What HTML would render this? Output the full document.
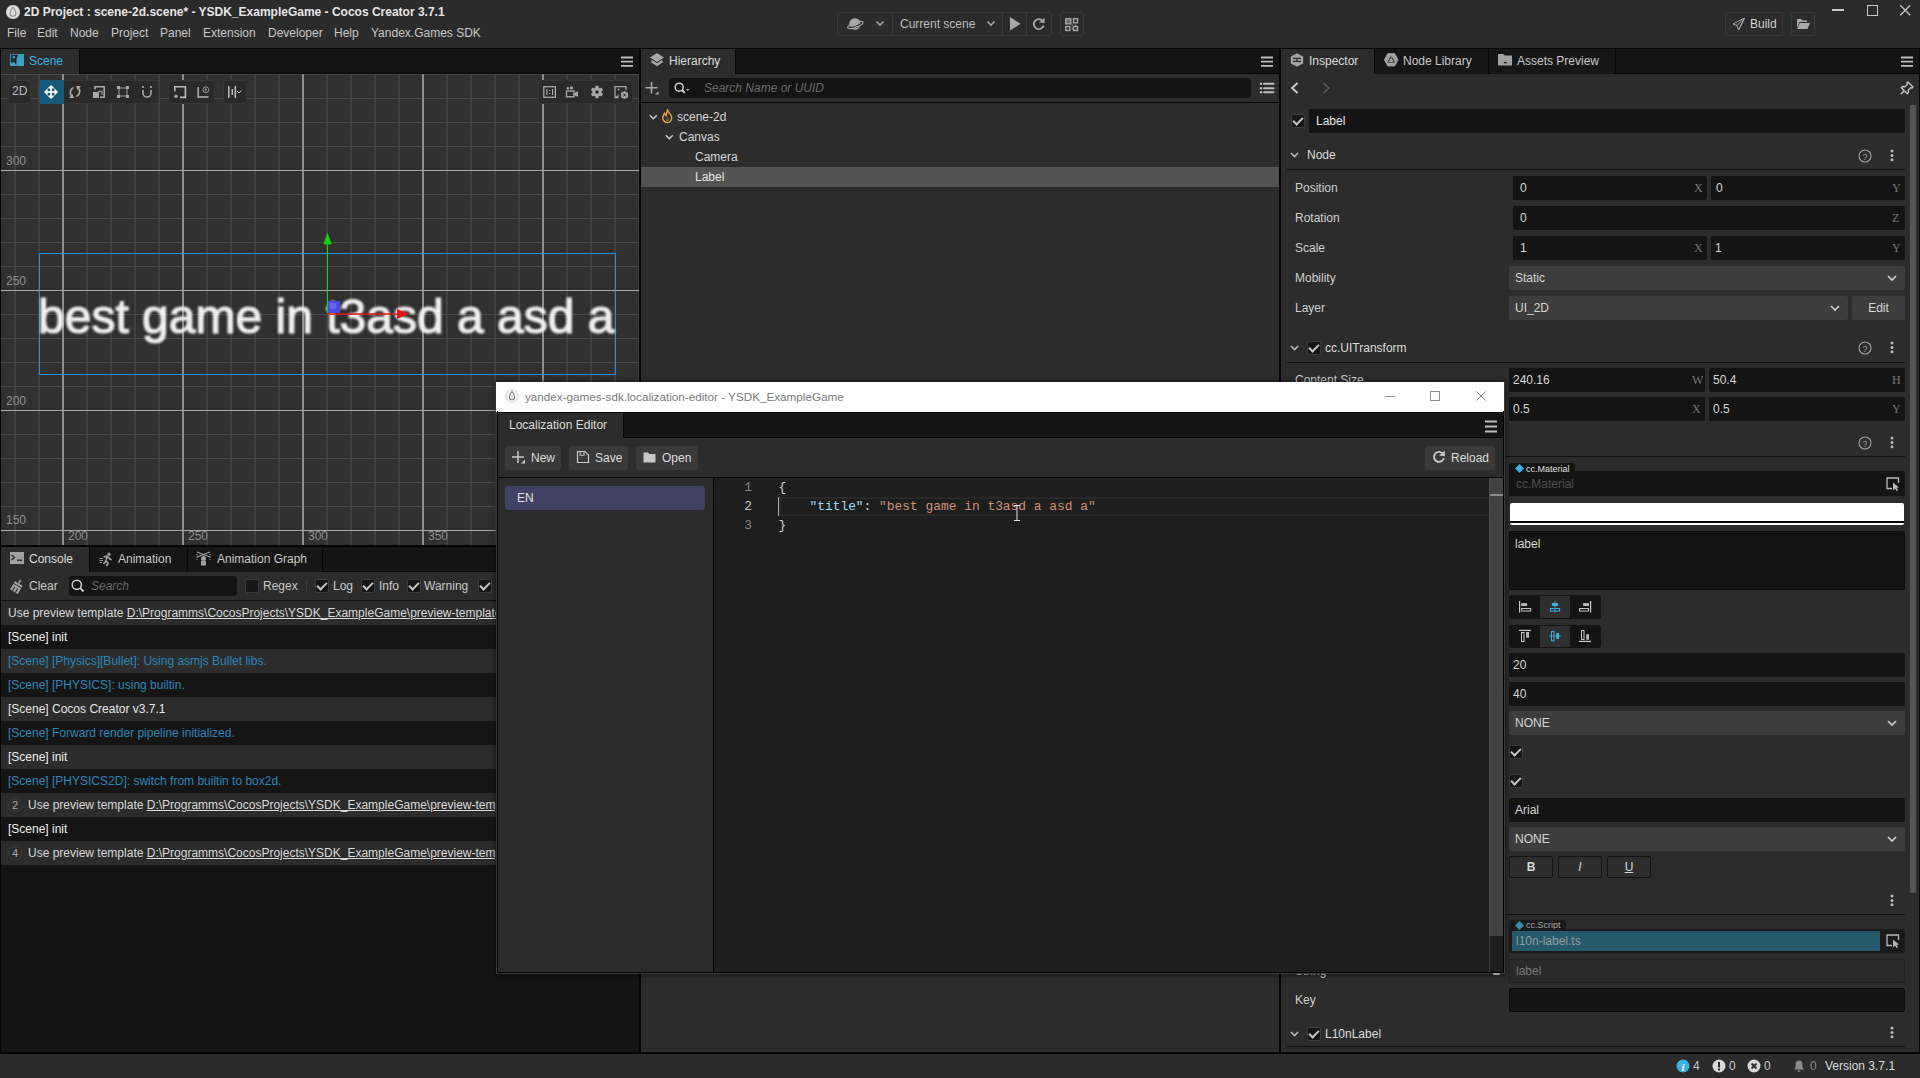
<!DOCTYPE html>
<html><head><meta charset="utf-8">
<style>
*{margin:0;padding:0;box-sizing:border-box}
html,body{width:1920px;height:1078px;overflow:hidden;background:#040404;font-family:"Liberation Sans",sans-serif;font-size:12px;color:#cfcfcf}
.a{position:absolute}
.t{position:absolute;white-space:nowrap;line-height:1}
svg{position:absolute;overflow:visible}
/* top */
#top{left:0;top:0;width:1920px;height:48px;background:#2b2b2b}
.menu{font-size:12px;color:#c8c8c8;top:27px}
.tabbar{background:#161616}
.tab{background:#2c2c2c}
.panel{background:#2c2c2c}
.inp{background:#141414;border-radius:2px}
.dd{background:#3d3d3d;border-radius:2px}
.lbl{font-size:12px;color:#cfcfcf}
.cb{width:14px;height:14px;border:1px solid #3c3c3c;border-radius:2px;background:#161616}
.cb.on::after{content:"";position:absolute;left:3px;top:0px;width:4px;height:8px;border:solid #c4c4c4;border-width:0 2px 2px 0;transform:rotate(45deg)}
.ax{font-family:"Liberation Serif",serif;font-size:12px;color:#777}
</style></head><body>

<!-- ============ TOP BAR ============ -->
<div id="top" class="a">
  <div class="t" style="left:24px;top:5.5px;font-size:12px;font-weight:bold;color:#e6e6e6">2D Project : scene-2d.scene* - YSDK_ExampleGame - Cocos Creator 3.7.1</div>
  <div class="t menu" style="left:7px">File</div>
  <div class="t menu" style="left:37px">Edit</div>
  <div class="t menu" style="left:70px">Node</div>
  <div class="t menu" style="left:111px">Project</div>
  <div class="t menu" style="left:160px">Panel</div>
  <div class="t menu" style="left:203px">Extension</div>
  <div class="t menu" style="left:268px">Developer</div>
  <div class="t menu" style="left:334px">Help</div>
  <div class="t menu" style="left:371px">Yandex.Games SDK</div>
</div>

<!-- ============ SCENE PANEL ============ -->
<div class="a" style="left:1px;top:73px;width:638px;height:472px;background:#303030;overflow:hidden" id="scene">
  <!-- subminor 12px -->
  <div class="a" style="left:0;top:0;width:638px;height:472px;background-image:linear-gradient(to right,#333 1px,transparent 1px),linear-gradient(to bottom,#333 1px,transparent 1px);background-size:12px 12px;background-position:1px 1px"></div>
  <!-- minor 24px -->
  <div class="a" style="left:0;top:0;width:638px;height:472px;background-image:linear-gradient(to right,#414141 2px,transparent 2px);background-size:24px 24px;background-position:13px 0"></div>
  <div class="a" style="left:0;top:0;width:638px;height:472px;background-image:linear-gradient(to bottom,#494949 1px,transparent 1px);background-size:24px 24px;background-position:0 1px"></div>
  <!-- major 120px -->
  <div class="a" style="left:0;top:0;width:638px;height:472px;background-image:linear-gradient(to right,#8e8e8e 2px,transparent 2px);background-size:120px 120px;background-position:61px 0"></div>
  <div class="a" style="left:0;top:0;width:638px;height:472px;background-image:linear-gradient(to bottom,#a8a8a8 1px,transparent 1px);background-size:120px 120px;background-position:0 97px"></div>
  <div class="t" style="left:5px;top:82px;color:#8f8f8f;font-size:12px">300</div>
  <div class="t" style="left:5px;top:202px;color:#8f8f8f;font-size:12px">250</div>
  <div class="t" style="left:5px;top:322px;color:#8f8f8f;font-size:12px">200</div>
  <div class="t" style="left:5px;top:441px;color:#8f8f8f;font-size:12px">150</div>
  <div class="t" style="left:67px;top:457px;color:#8f8f8f;font-size:12px">200</div>
  <div class="t" style="left:187px;top:457px;color:#8f8f8f;font-size:12px">250</div>
  <div class="t" style="left:307px;top:457px;color:#8f8f8f;font-size:12px">300</div>
  <div class="t" style="left:427px;top:457px;color:#8f8f8f;font-size:12px">350</div>
  <!-- label rect -->
  <div class="a" style="left:38px;top:180px;width:577px;height:122px;border:1px solid #1e90e6"></div>
  <div class="t" style="left:37px;top:220px;font-size:48px;color:#f0f0f0;filter:blur(0.8px);-webkit-text-stroke:1.2px #f0f0f0">best game in t3asd a asd a</div>
  <!-- gizmo -->
  <div class="a" style="left:325.5px;top:170px;width:1.8px;height:70px;background:#12d20e"></div>
  <svg style="left:0;top:0" width="638" height="472"><polygon points="326.5,159.5 322.3,171.5 330.7,171.5" fill="#12d20e"/><rect x="326" y="240.3" width="71" height="1.5" fill="#e01818"/><polygon points="396,236 408.5,241 396,246" fill="#e01818"/><rect x="327" y="228" width="12" height="12" fill="#4c4cdc"/><rect x="329" y="230" width="6" height="6" fill="#7070ee" opacity="0.7"/></svg>
  <!-- toolbar -->
  <div class="a" style="left:7px;top:7px;width:23px;height:24px;background:#2a2a2a;border-radius:3px;border:1px solid #363636"></div>
  <div class="t" style="left:11px;top:7px;line-height:23px;font-size:12px;color:#bdbdbd">2D</div>
  <div class="a" style="left:38px;top:7px;width:120px;height:24px;background:#2a2a2a;border-radius:3px;border:1px solid #363636"></div>
  <div class="a" style="left:38px;top:7px;width:25px;height:24px;background:#145a78;border-radius:3px 0 0 3px"></div>
  <div class="a" style="left:167px;top:7px;width:47px;height:24px;background:#2a2a2a;border-radius:3px;border:1px solid #363636"></div>
  <div class="a" style="left:222px;top:7px;width:24px;height:24px;background:#2a2a2a;border-radius:3px;border:1px solid #363636"></div>
  <div class="a" style="left:537px;top:7px;width:95px;height:24px;background:#2a2a2a;border-radius:3px;border:1px solid #363636"></div>
  <svg id="sceneicons" style="left:0;top:0" width="638" height="60">
  </svg>
</div>
<div class="a" style="left:1px;top:49px;width:638px;height:25px;background:#141414"></div><div class="a" style="left:79px;top:73px;width:560px;height:1px;background:#060606"></div><div class="a tab" style="left:1px;top:49px;width:78px;height:25px"></div><div class="a" style="left:79px;top:49px;width:1px;height:25px;background:#060606"></div>
<div class="t" style="left:29px;top:49px;line-height:24px;font-size:12px;color:#3ab4e2">Scene</div>

<!-- ============ CONSOLE PANEL ============ -->
<div class="a" style="left:1px;top:547px;width:638px;height:25px;background:#141414"></div><div class="a" style="left:89px;top:571px;width:550px;height:1px;background:#060606"></div><div class="a tab" style="left:1px;top:547px;width:88px;height:25px"></div><div class="a" style="left:90px;top:547px;width:97px;height:25px;background:#161616"></div><div class="a" style="left:89px;top:547px;width:1px;height:25px;background:#060606"></div><div class="a" style="left:188px;top:547px;width:134px;height:25px;background:#161616"></div><div class="a" style="left:187px;top:547px;width:1px;height:25px;background:#060606"></div><div class="a" style="left:322px;top:547px;width:1px;height:25px;background:#060606"></div>
<div class="t" style="left:29px;top:547px;line-height:25px;color:#dcdcdc">Console</div>
<div class="t" style="left:118px;top:547px;line-height:25px;color:#c8c8c8">Animation</div>
<div class="t" style="left:217px;top:547px;line-height:25px;color:#c8c8c8">Animation Graph</div>
<div class="a panel" style="left:1px;top:572px;width:638px;height:28px"></div>
<div class="t" style="left:29px;top:572px;line-height:28px;color:#c8c8c8">Clear</div>
<div class="a inp" style="left:69px;top:576px;width:168px;height:20px;border-radius:3px"></div>
<div class="t" style="left:91px;top:576px;line-height:20px;color:#6b6b6b;font-style:italic">Search</div>
<div class="a cb" style="left:245px;top:579px"></div>
<div class="t" style="left:263px;top:572px;line-height:28px;color:#c8c8c8">Regex</div>
<div class="a" style="left:306px;top:580px;width:1px;height:12px;background:#3c3c3c"></div>
<div class="a cb on" style="left:315px;top:579px"></div>
<div class="t" style="left:333px;top:572px;line-height:28px;color:#c8c8c8">Log</div>
<div class="a cb on" style="left:361px;top:579px"></div>
<div class="t" style="left:379px;top:572px;line-height:28px;color:#c8c8c8">Info</div>
<div class="a cb on" style="left:407px;top:579px"></div>
<div class="t" style="left:424px;top:572px;line-height:28px;color:#c8c8c8">Warning</div>
<div class="a cb on" style="left:478px;top:579px"></div>
<div class="a" style="left:1px;top:600px;width:638px;height:1px;background:#0e0e0e"></div>
<div class="a" style="left:1px;top:601px;width:638px;height:451px;background:#141414"></div>
<div class="a" style="left:1px;top:601px;width:638px;height:24px;background:#2c2c2c"></div>
<div class="t" style="left:8px;top:601px;line-height:24px;color:#d9d9d9">Use preview template <u>D:\Programms\CocosProjects\YSDK_ExampleGame\preview-template</u></div>
<div class="a" style="left:1px;top:625px;width:638px;height:24px;background:#151515"></div>
<div class="t" style="left:8px;top:625px;line-height:24px;color:#f0f0f0">[Scene] init</div>
<div class="a" style="left:1px;top:649px;width:638px;height:24px;background:#2c2c2c"></div>
<div class="t" style="left:8px;top:649px;line-height:24px;color:#2b86b8">[Scene] [Physics][Bullet]: Using asmjs Bullet libs.</div>
<div class="a" style="left:1px;top:673px;width:638px;height:24px;background:#151515"></div>
<div class="t" style="left:8px;top:673px;line-height:24px;color:#2b86b8">[Scene] [PHYSICS]: using builtin.</div>
<div class="a" style="left:1px;top:697px;width:638px;height:24px;background:#2c2c2c"></div>
<div class="t" style="left:8px;top:697px;line-height:24px;color:#e6e6e6">[Scene] Cocos Creator v3.7.1</div>
<div class="a" style="left:1px;top:721px;width:638px;height:24px;background:#151515"></div>
<div class="t" style="left:8px;top:721px;line-height:24px;color:#2b86b8">[Scene] Forward render pipeline initialized.</div>
<div class="a" style="left:1px;top:745px;width:638px;height:24px;background:#2c2c2c"></div>
<div class="t" style="left:8px;top:745px;line-height:24px;color:#f0f0f0">[Scene] init</div>
<div class="a" style="left:1px;top:769px;width:638px;height:24px;background:#151515"></div>
<div class="t" style="left:8px;top:769px;line-height:24px;color:#2b86b8">[Scene] [PHYSICS2D]: switch from builtin to box2d.</div>
<div class="a" style="left:1px;top:793px;width:638px;height:24px;background:#2c2c2c"></div>
<div class="a" style="left:8px;top:798px;width:14px;height:14px;border-radius:7px;border:1px solid #3a3a3a;color:#aaa;font-size:11px;line-height:12px;text-align:center">2</div>
<div class="t" style="left:28px;top:793px;line-height:24px;color:#d9d9d9">Use preview template <u>D:\Programms\CocosProjects\YSDK_ExampleGame\preview-template</u></div>
<div class="a" style="left:1px;top:817px;width:638px;height:24px;background:#151515"></div>
<div class="t" style="left:8px;top:817px;line-height:24px;color:#f0f0f0">[Scene] init</div>
<div class="a" style="left:1px;top:841px;width:638px;height:24px;background:#2c2c2c"></div>
<div class="a" style="left:8px;top:846px;width:14px;height:14px;border-radius:7px;border:1px solid #3a3a3a;color:#aaa;font-size:11px;line-height:12px;text-align:center">4</div>
<div class="t" style="left:28px;top:841px;line-height:24px;color:#d9d9d9">Use preview template <u>D:\Programms\CocosProjects\YSDK_ExampleGame\preview-template</u></div>

<!-- ============ HIERARCHY PANEL ============ -->
<div class="a" style="left:641px;top:49px;width:638px;height:25px;background:#141414"></div><div class="a" style="left:735px;top:73px;width:544px;height:1px;background:#060606"></div><div class="a tab" style="left:641px;top:49px;width:94px;height:25px"></div><div class="a" style="left:735px;top:49px;width:1px;height:25px;background:#060606"></div>
<div class="t" style="left:669px;top:49px;line-height:24px;color:#dcdcdc">Hierarchy</div>
<div class="a panel" style="left:641px;top:74px;width:638px;height:28px"></div>
<div class="a inp" style="left:669px;top:78px;width:582px;height:20px;border-radius:3px"></div>
<div class="t" style="left:704px;top:78px;line-height:20px;color:#6b6b6b;font-style:italic">Search Name or UUID</div>
<div class="a panel" style="left:641px;top:103px;width:638px;height:949px"></div>
<div class="a" style="left:641px;top:167px;width:638px;height:20px;background:#535353"></div>
<div class="t" style="left:677px;top:107px;line-height:20px;color:#d6d6d6">scene-2d</div>
<div class="t" style="left:679px;top:127px;line-height:20px;color:#d6d6d6">Canvas</div>
<div class="t" style="left:695px;top:147px;line-height:20px;color:#d6d6d6">Camera</div>
<div class="t" style="left:695px;top:167px;line-height:20px;color:#e6e6e6">Label</div>
<svg style="left:641px;top:49px" width="638" height="140">
  <!-- chevrons -->
  <polyline points="8.8,66.2 12.3,69.7 15.8,66.2" fill="none" stroke="#c8c8c8" stroke-width="1.6"/>
  <polyline points="24.8,86.2 28.3,89.7 31.8,86.2" fill="none" stroke="#c8c8c8" stroke-width="1.6"/>
</svg>
<!-- ============ INSPECTOR PANEL ============ -->
<div class="a" style="left:1281px;top:49px;width:638px;height:25px;background:#141414"></div><div class="a" style="left:1374px;top:73px;width:545px;height:1px;background:#060606"></div><div class="a tab" style="left:1281px;top:49px;width:93px;height:25px"></div><div class="a" style="left:1375px;top:49px;width:113px;height:25px;background:#161616"></div><div class="a" style="left:1374px;top:49px;width:1px;height:25px;background:#060606"></div><div class="a" style="left:1489px;top:49px;width:126px;height:25px;background:#161616"></div><div class="a" style="left:1488px;top:49px;width:1px;height:25px;background:#060606"></div><div class="a" style="left:1615px;top:49px;width:1px;height:25px;background:#060606"></div>
<div class="t" style="left:1309px;top:49px;line-height:24px;color:#dcdcdc">Inspector</div>
<div class="t" style="left:1403px;top:49px;line-height:24px;color:#c8c8c8">Node Library</div>
<div class="t" style="left:1517px;top:49px;line-height:24px;color:#c8c8c8">Assets Preview</div>
<div class="a panel" style="left:1281px;top:74px;width:639px;height:978px"></div>
<div class="a" style="left:1910px;top:105px;width:6px;height:788px;background:#555555;border-radius:1px"></div>
<div class="a" style="left:1919px;top:49px;width:1px;height:1003px;background:#060606"></div>
<div class="a cb on" style="left:1291px;top:114px;width:14px;height:14px"></div>
<div class="a" style="left:1309px;top:109px;width:596px;height:24px;background:#141414;border-radius:2px"></div>
<div class="t" style="left:1316px;top:109px;line-height:25px;color:#e6e6e6">Label</div>
<div class="t" style="left:1307px;top:145px;line-height:20px;color:#dcdcdc">Node</div>
<div class="a" style="left:1287px;top:169px;width:618px;height:1px;background:#101010"></div>
<div class="t" style="left:1295px;top:176px;line-height:24px;color:#d0d0d0">Position</div>
<div class="a" style="left:1513px;top:176px;width:194px;height:24px;background:#141414;border-radius:2px"></div>
<div class="t" style="left:1520px;top:176px;line-height:24px;color:#d6d6d6">0</div>
<div class="t ax" style="left:1694px;top:176px;line-height:24px">X</div>
<div class="a" style="left:1711px;top:176px;width:194px;height:24px;background:#141414;border-radius:2px"></div>
<div class="t" style="left:1716px;top:176px;line-height:24px;color:#d6d6d6">0</div>
<div class="t ax" style="left:1892px;top:176px;line-height:24px">Y</div>
<div class="t" style="left:1295px;top:206px;line-height:24px;color:#d0d0d0">Rotation</div>
<div class="a" style="left:1513px;top:206px;width:392px;height:24px;background:#141414;border-radius:2px"></div>
<div class="t" style="left:1520px;top:206px;line-height:24px;color:#d6d6d6">0</div>
<div class="t ax" style="left:1892px;top:206px;line-height:24px">Z</div>
<div class="t" style="left:1295px;top:236px;line-height:24px;color:#d0d0d0">Scale</div>
<div class="a" style="left:1513px;top:236px;width:194px;height:24px;background:#141414;border-radius:2px"></div>
<div class="t" style="left:1520px;top:236px;line-height:24px;color:#d6d6d6">1</div>
<div class="t ax" style="left:1694px;top:236px;line-height:24px">X</div>
<div class="a" style="left:1711px;top:236px;width:194px;height:24px;background:#141414;border-radius:2px"></div>
<div class="t" style="left:1715px;top:236px;line-height:24px;color:#d6d6d6">1</div>
<div class="t ax" style="left:1892px;top:236px;line-height:24px">Y</div>
<div class="t" style="left:1295px;top:266px;line-height:24px;color:#d0d0d0">Mobility</div>
<div class="a" style="left:1509px;top:266px;width:396px;height:24px;background:#3d3d3d;border-radius:2px"></div>
<div class="t" style="left:1515px;top:266px;line-height:24px;color:#d6d6d6">Static</div>
<svg style="left:1886px;top:272px" width="12" height="12"><polyline points="2,4 6,8 10,4" fill="none" stroke="#d0d0d0" stroke-width="1.6"/></svg>
<div class="t" style="left:1295px;top:296px;line-height:24px;color:#d0d0d0">Layer</div>
<div class="a" style="left:1509px;top:296px;width:339px;height:24px;background:#3d3d3d;border-radius:2px"></div>
<div class="t" style="left:1515px;top:296px;line-height:24px;color:#d6d6d6">UI_2D</div>
<svg style="left:1829px;top:302px" width="12" height="12"><polyline points="2,4 6,8 10,4" fill="none" stroke="#d0d0d0" stroke-width="1.6"/></svg>
<div class="a" style="left:1852px;top:296px;width:53px;height:24px;background:#3d3d3d;border-radius:2px"></div>
<div class="t" style="left:1852px;top:296px;width:53px;text-align:center;line-height:24px;color:#d6d6d6">Edit</div>
<div class="a cb on" style="left:1307px;top:341px;width:14px;height:14px"></div>
<div class="t" style="left:1325px;top:338px;line-height:20px;color:#dcdcdc">cc.UITransform</div>
<div class="a" style="left:1287px;top:362px;width:618px;height:1px;background:#101010"></div>
<div class="t" style="left:1295px;top:368px;line-height:24px;color:#d0d0d0">Content Size</div>
<div class="a" style="left:1509px;top:368px;width:196px;height:24px;background:#141414;border-radius:2px"></div>
<div class="t" style="left:1513px;top:368px;line-height:24px;color:#d6d6d6">240.16</div>
<div class="t ax" style="left:1692px;top:368px;line-height:24px">W</div>
<div class="a" style="left:1709px;top:368px;width:196px;height:24px;background:#141414;border-radius:2px"></div>
<div class="t" style="left:1713px;top:368px;line-height:24px;color:#d6d6d6">50.4</div>
<div class="t ax" style="left:1892px;top:368px;line-height:24px">H</div>
<div class="t" style="left:1295px;top:397px;line-height:24px;color:#d0d0d0">Anchor Point</div>
<div class="a" style="left:1509px;top:397px;width:196px;height:24px;background:#141414;border-radius:2px"></div>
<div class="t" style="left:1513px;top:397px;line-height:24px;color:#d6d6d6">0.5</div>
<div class="t ax" style="left:1692px;top:397px;line-height:24px">X</div>
<div class="a" style="left:1709px;top:397px;width:196px;height:24px;background:#141414;border-radius:2px"></div>
<div class="t" style="left:1713px;top:397px;line-height:24px;color:#d6d6d6">0.5</div>
<div class="t ax" style="left:1892px;top:397px;line-height:24px">Y</div>
<div class="a" style="left:1287px;top:456px;width:618px;height:1px;background:#101010"></div>
<div class="a" style="left:1509px;top:463px;width:66px;height:12px;background:#141414;border-radius:3px 3px 0 0"></div>
<div class="a" style="left:1509px;top:471px;width:396px;height:25px;background:#141414;border-radius:0 2px 2px 2px"></div>
<div class="t" style="left:1526px;top:463px;line-height:12px;font-size:9px;color:#e0e0e0">cc.Material</div>
<div class="t" style="left:1516px;top:472px;line-height:25px;color:#4e4e4e">cc.Material</div>
<div class="a" style="left:1510px;top:503px;width:394px;height:22px;background:#fff;border-radius:2px"></div><div class="a" style="left:1510px;top:521px;width:394px;height:2px;background:#000"></div>
<div class="a" style="left:1509px;top:531px;width:396px;height:59px;background:#141414;border-radius:2px;border:1px solid #0c0c0c"></div>
<div class="t" style="left:1515px;top:534px;line-height:20px;color:#d6d6d6">label</div>
<div class="a" style="left:1509px;top:595px;width:92px;height:24px;background:#141414;border-radius:3px"></div><div class="a" style="left:1540px;top:596px;width:30px;height:22px;background:#2f2f2f"></div>
<div class="a" style="left:1509px;top:625px;width:92px;height:23px;background:#141414;border-radius:3px"></div><div class="a" style="left:1540px;top:626px;width:30px;height:21px;background:#2f2f2f"></div>
<div class="a" style="left:1509px;top:653px;width:396px;height:24px;background:#141414;border-radius:2px"></div>
<div class="t" style="left:1513px;top:653px;line-height:24px;color:#d6d6d6">20</div>
<div class="a" style="left:1509px;top:682px;width:396px;height:24px;background:#141414;border-radius:2px"></div>
<div class="t" style="left:1513px;top:682px;line-height:24px;color:#d6d6d6">40</div>
<div class="a" style="left:1509px;top:711px;width:396px;height:24px;background:#3d3d3d;border-radius:2px"></div>
<div class="t" style="left:1515px;top:711px;line-height:24px;color:#d6d6d6">NONE</div>
<svg style="left:1886px;top:717px" width="12" height="12"><polyline points="2,4 6,8 10,4" fill="none" stroke="#d0d0d0" stroke-width="1.6"/></svg>
<div class="a cb on" style="left:1509px;top:745px;width:14px;height:14px"></div>
<div class="a cb on" style="left:1509px;top:774px;width:14px;height:14px"></div>
<div class="a" style="left:1509px;top:798px;width:396px;height:24px;background:#141414;border-radius:2px"></div>
<div class="t" style="left:1515px;top:798px;line-height:24px;color:#d6d6d6">Arial</div>
<div class="a" style="left:1509px;top:827px;width:396px;height:24px;background:#3d3d3d;border-radius:2px"></div>
<div class="t" style="left:1515px;top:827px;line-height:24px;color:#d6d6d6">NONE</div>
<svg style="left:1886px;top:833px" width="12" height="12"><polyline points="2,4 6,8 10,4" fill="none" stroke="#d0d0d0" stroke-width="1.6"/></svg>
<div class="a" style="left:1509px;top:856px;width:44px;height:22px;background:#2e2e2e;border:1px solid #141414;border-radius:2px"></div><div class="t" style="left:1509px;top:856px;width:44px;text-align:center;line-height:22px;color:#d6d6d6;font-weight:bold">B</div>
<div class="a" style="left:1558px;top:856px;width:44px;height:22px;background:#2e2e2e;border:1px solid #141414;border-radius:2px"></div><div class="t" style="left:1558px;top:856px;width:44px;text-align:center;line-height:22px;color:#d6d6d6;font-style:italic">I</div>
<div class="a" style="left:1607px;top:856px;width:44px;height:22px;background:#2e2e2e;border:1px solid #141414;border-radius:2px"></div><div class="t" style="left:1607px;top:856px;width:44px;text-align:center;line-height:22px;color:#d6d6d6;text-decoration:underline">U</div>
<div class="a" style="left:1287px;top:914px;width:618px;height:1px;background:#101010"></div>
<div class="a" style="left:1509px;top:920px;width:57px;height:12px;background:#1a1a1a;border-radius:3px 3px 0 0"></div>
<div class="t" style="left:1526px;top:919px;line-height:12px;font-size:9px;color:#a8a8a8">cc.Script</div>
<div class="a" style="left:1509px;top:929px;width:396px;height:24px;background:#1a1a1a;border-radius:0 2px 2px 2px"></div>
<div class="a" style="left:1512px;top:931px;width:368px;height:20px;background:#265a6a"></div>
<div class="t" style="left:1516px;top:931px;line-height:20px;color:#8e9a9e">l10n-label.ts</div>
<div class="t" style="left:1295px;top:959px;line-height:24px;color:#d0d0d0">String</div>
<div class="a" style="left:1509px;top:959px;width:396px;height:24px;background:#2a2a2a;border:1px solid #222;border-radius:2px"></div><div class="t" style="left:1516px;top:959px;line-height:24px;color:#777">label</div>
<div class="t" style="left:1295px;top:988px;line-height:24px;color:#d0d0d0">Key</div>
<div class="a" style="left:1509px;top:988px;width:396px;height:24px;background:#141414;border:1px solid #0a0a0a;border-radius:2px"></div>
<div class="a cb on" style="left:1307px;top:1027px;width:14px;height:14px"></div>
<div class="t" style="left:1325px;top:1024px;line-height:20px;color:#dcdcdc">L10nLabel</div>
<div class="a" style="left:1287px;top:1046px;width:618px;height:1px;background:#101010"></div>
<!-- ============ STATUS BAR ============ -->
<div class="a" style="left:0;top:1054px;width:1920px;height:24px;background:#2b2b2b"></div>
<svg style="left:1676px;top:1059px" width="14" height="14"><circle cx="7" cy="7" r="6.5" fill="#3db1e5"/><text x="7" y="11.5" font-family="Liberation Serif" font-style="italic" font-weight="bold" font-size="11" fill="#fff" text-anchor="middle">i</text></svg>
<div class="t" style="left:1693px;top:1054px;line-height:24px;color:#c8c8c8">4</div>
<svg style="left:1712px;top:1059px" width="14" height="14"><circle cx="7" cy="7" r="6.5" fill="#d8d8d8"/><rect x="6" y="3" width="2" height="5.5" fill="#2b2b2b"/><rect x="6" y="9.5" width="2" height="2" fill="#2b2b2b"/></svg>
<div class="t" style="left:1729px;top:1054px;line-height:24px;color:#c8c8c8">0</div>
<svg style="left:1747px;top:1059px" width="14" height="14"><circle cx="7" cy="7" r="6.5" fill="#d8d8d8"/><path d="M4.5,4.5 L9.5,9.5 M9.5,4.5 L4.5,9.5" stroke="#2b2b2b" stroke-width="1.8"/></svg>
<div class="t" style="left:1764px;top:1054px;line-height:24px;color:#c8c8c8">0</div>
<svg style="left:1792px;top:1059px" width="14" height="14"><path d="M7,1.5 C4.5,1.5 3.5,3.5 3.5,5.5 V8.5 L2,10.5 H12 L10.5,8.5 V5.5 C10.5,3.5 9.5,1.5 7,1.5 Z M5.5,11.5 A1.5,1.5 0 0 0 8.5,11.5 Z" fill="#8a8a8a"/></svg>
<div class="t" style="left:1810px;top:1054px;line-height:24px;color:#8a8a8a">0</div>
<div class="t" style="left:1825px;top:1054px;line-height:24px;color:#dcdcdc">Version 3.7.1</div>

<!-- top toolbar -->
<div class="a" style="left:837px;top:12px;width:215px;height:24px;border:1px solid #3a3a3a;border-radius:3px"></div>
<div class="a" style="left:892px;top:13px;width:1px;height:22px;background:#3a3a3a"></div>
<div class="a" style="left:1002px;top:13px;width:1px;height:22px;background:#3a3a3a"></div>
<div class="a" style="left:1026px;top:13px;width:1px;height:22px;background:#3a3a3a"></div>
<div class="t" style="left:900px;top:12px;line-height:24px;color:#bcbcbc">Current scene</div>
<div class="a" style="left:1060px;top:12px;width:24px;height:24px;border:1px solid #3a3a3a;border-radius:3px"></div>
<div class="a" style="left:1725px;top:12px;width:58px;height:24px;border:1px solid #3a3a3a;border-radius:3px"></div>
<div class="t" style="left:1750px;top:12px;line-height:24px;color:#d0d0d0">Build</div>
<div class="a" style="left:1791px;top:12px;width:24px;height:24px;border:1px solid #3a3a3a;border-radius:3px"></div>
<div class="a" style="left:1832px;top:9.2px;width:12px;height:1.5px;background:#c8c8c8"></div>
<div class="a" style="left:1867px;top:5px;width:10.5px;height:10.5px;border:1.3px solid #c8c8c8"></div>
<svg style="left:1899px;top:4px" width="13" height="13"><path d="M1.3,1.3 L11.2,11.2 M11.2,1.3 L1.3,11.2" stroke="#c8c8c8" stroke-width="1.3"/></svg>

<!-- ============ ICONS A ============ -->
<!-- app icon -->
<svg style="left:5px;top:4px" width="16" height="16"><circle cx="8" cy="8" r="7" fill="#dcdcdc"/><path d="M8,3 C6.5,5.5 5,7 5,9.2 A3,3 0 0 0 11,9.2 C11,7 9.5,5.5 8,3 Z" fill="none" stroke="#8c8c8c" stroke-width="1.1"/></svg>
<!-- planet -->
<svg style="left:845px;top:16px" width="20" height="16"><g transform="rotate(-20 10 8)"><circle cx="10" cy="8" r="5.8" fill="#a8a8a8"/><path d="M2.2,8.6 A7.8,2.4 0 0 0 17.8,8.6" fill="none" stroke="#2b2b2b" stroke-width="2.4"/><path d="M4.2,7.2 A7.8,2.4 0 0 0 1.8,8.8 A7.8,2.4 0 0 0 18.2,8.8 A7.8,2.4 0 0 0 15.8,7.2" fill="none" stroke="#a8a8a8" stroke-width="1.2"/></g></svg>
<svg style="left:875px;top:20px" width="12" height="8"><polyline points="1.5,1.5 5,5 8.5,1.5" fill="none" stroke="#a8a8a8" stroke-width="1.6"/></svg>
<svg style="left:986px;top:20px" width="12" height="8"><polyline points="1.5,1.5 5,5 8.5,1.5" fill="none" stroke="#a8a8a8" stroke-width="1.6"/></svg>
<svg style="left:1010px;top:17px" width="12" height="15"><polygon points="0,0 10.5,6.8 0,13.6" fill="#a8a8a8"/></svg>
<svg style="left:1032px;top:17px" width="14" height="14"><path d="M10.8,4 A5,5 0 1 0 11.6,8.6" fill="none" stroke="#a8a8a8" stroke-width="1.8"/><polygon points="12.5,0.8 12.5,6.2 7.2,5.2" fill="#a8a8a8"/></svg>
<svg style="left:1065px;top:18px" width="14" height="14"><rect x="0.8" y="0.8" width="5" height="5" fill="#666" stroke="#a8a8a8" stroke-width="1.4"/><rect x="8.5" y="0.8" width="4" height="4" fill="none" stroke="#a8a8a8" stroke-width="1.4"/><rect x="0.8" y="8.5" width="4" height="4" fill="none" stroke="#a8a8a8" stroke-width="1.4"/><rect x="8.5" y="8.5" width="4" height="4" fill="none" stroke="#a8a8a8" stroke-width="1.4"/><rect x="6.5" y="6.5" width="1.2" height="1.2" fill="#a8a8a8"/><rect x="6.5" y="10" width="1.2" height="1.2" fill="#a8a8a8"/><rect x="10" y="6.5" width="1.2" height="1.2" fill="#a8a8a8"/></svg>
<!-- build plane -->
<svg style="left:1732px;top:17px" width="14" height="14"><path d="M12.5,1 L1,7 L5,8.5 L6.5,13 L8.5,9.5 Z M5,8.5 L12.5,1 L6.5,13" fill="none" stroke="#a8a8a8" stroke-width="1" stroke-linejoin="round"/></svg>
<svg style="left:1796px;top:18px" width="15" height="12"><path d="M1,1 H5 L6.5,2.5 H11 V4 H3.5 L1,10 Z" fill="#a8a8a8"/><path d="M3.8,5 H14 L11.5,11 H1.2 Z" fill="#a8a8a8"/></svg>

<!-- scene tab icon -->
<svg style="left:10px;top:54px" width="15" height="13"><rect x="0" y="0" width="14" height="12" fill="#3aa3c4"/><path d="M0.8,0.8 H8.5 C7,2.5 6.5,5 6.2,11.2 L4.5,8.5 C3.5,8 2,8.2 0.8,9 Z" fill="#1e2a30"/><circle cx="3.8" cy="3.2" r="1.2" fill="#3aa3c4"/><path d="M0.8,12 C1.5,9.5 3,8.6 4.5,9 L6,12 Z" fill="#3aa3c4"/></svg>
<!-- hamburgers -->
<svg style="left:621px;top:56px" width="12" height="11"><path d="M0,1.5 H12 M0,5.7 H12 M0,9.9 H12" stroke="#bdbdbd" stroke-width="1.8"/></svg>
<svg style="left:1261px;top:56px" width="12" height="11"><path d="M0,1.5 H12 M0,5.7 H12 M0,9.9 H12" stroke="#bdbdbd" stroke-width="1.8"/></svg>
<svg style="left:1901px;top:56px" width="12" height="11"><path d="M0,1.5 H12 M0,5.7 H12 M0,9.9 H12" stroke="#bdbdbd" stroke-width="1.8"/></svg>

<!-- scene toolbar icons -->
<svg style="left:0;top:73px" width="640" height="40">
 <g transform="translate(0,-73)">
  <!-- move -->
  <g fill="#f4f4f4">
   <polygon points="51,85 47.3,88.6 54.7,88.6"/><polygon points="51,99 47.3,95.4 54.7,95.4"/>
   <polygon points="44,92 47.6,88.3 47.6,95.7"/><polygon points="58,92 54.4,88.3 54.4,95.7"/>
   <rect x="50.1" y="88" width="1.8" height="8"/><rect x="47" y="91.1" width="8" height="1.8"/>
  </g>
  <!-- rotate -->
  <path d="M73.5,87.5 A5.5,5.5 0 0 0 72,96.5" fill="none" stroke="#a8a8a8" stroke-width="1.7"/>
  <polygon points="69,98 74,98 72.5,94" fill="#a8a8a8"/>
  <path d="M76.5,96.5 A5.5,5.5 0 0 0 78,87.5" fill="none" stroke="#a8a8a8" stroke-width="1.7"/>
  <polygon points="81,86 76,86 77.5,90" fill="#a8a8a8"/>
  <!-- scale -->
  <path d="M95,89.5 V86.8 H104.2 V97.2 H100" fill="none" stroke="#a8a8a8" stroke-width="1.6"/>
  <path d="M98,91.5 H102 V95" fill="none" stroke="#888" stroke-width="1.4"/>
  <rect x="93" y="92" width="6" height="6" fill="#a8a8a8"/>
  <!-- rect -->
  <rect x="119" y="88" width="8" height="8" fill="none" stroke="#999" stroke-width="1"/>
  <rect x="117" y="86" width="3" height="3" fill="#a8a8a8"/><rect x="126" y="86" width="3" height="3" fill="#a8a8a8"/>
  <rect x="117" y="95" width="3" height="3" fill="#a8a8a8"/><rect x="126" y="95" width="3" height="3" fill="#a8a8a8"/>
  <!-- magnet -->
  <path d="M143,90 V93 A4,4 0 0 0 151,93 V90" fill="none" stroke="#a8a8a8" stroke-width="1.6"/>
  <rect x="142.2" y="86" width="1.6" height="2" fill="#a8a8a8"/><rect x="150.2" y="86" width="1.6" height="2" fill="#a8a8a8"/>
  <!-- pivot -->
  <path d="M174.8,91.5 V86.8 H185.4 V97.4 H180" fill="none" stroke="#b8b8b8" stroke-width="1.6"/>
  <circle cx="176" cy="96.2" r="1.8" fill="#a8a8a8"/>
  <!-- local/global -->
  <path d="M198.2,87 V97 H208.5" fill="none" stroke="#b8b8b8" stroke-width="1.4"/>
  <circle cx="205.8" cy="89.8" r="2.9" fill="none" stroke="#999" stroke-width="1"/>
  <path d="M204.5,89.8 H207 M205.8,88 V91.5" stroke="#999" stroke-width="0.8"/>
  <!-- align bars -->
  <rect x="228" y="86" width="1.6" height="12" fill="#b8b8b8"/>
  <rect x="231.5" y="89" width="1.6" height="6" fill="#b8b8b8"/>
  <rect x="234.5" y="86" width="1.6" height="12" fill="#b8b8b8"/>
  <polyline points="237,91 239,93 241.5,90.5" fill="none" stroke="#b8b8b8" stroke-width="1"/>
  <!-- 1:1 -->
  <rect x="543.8" y="86.7" width="11.6" height="10.6" fill="none" stroke="#a8a8a8" stroke-width="1.3"/>
  <rect x="546.3" y="89" width="1.2" height="6" fill="#a8a8a8"/><rect x="552" y="89" width="1.2" height="6" fill="#a8a8a8"/>
  <rect x="549.2" y="90" width="1.1" height="1.1" fill="#a8a8a8"/><rect x="549.2" y="93" width="1.1" height="1.1" fill="#a8a8a8"/>
  <!-- camera -->
  <rect x="566.5" y="91" width="7.5" height="5.8" fill="none" stroke="#a8a8a8" stroke-width="1.4"/>
  <polygon points="574,93.5 578,91 578,97 574,95" fill="#a8a8a8"/>
  <circle cx="567.8" cy="88.3" r="1.2" fill="#a8a8a8"/><circle cx="571.5" cy="87.8" r="1.6" fill="#a8a8a8"/>
  <!-- gear -->
  <g transform="translate(597,92)">
   <circle r="4.6" fill="#a8a8a8"/>
   <g fill="#a8a8a8"><rect x="-1.6" y="-6.2" width="3.2" height="12.4"/><rect x="-1.6" y="-6.2" width="3.2" height="12.4" transform="rotate(60)"/><rect x="-1.6" y="-6.2" width="3.2" height="12.4" transform="rotate(120)"/></g>
   <circle r="1.8" fill="#2a2a2a"/>
  </g>
  <!-- image gear -->
  <path d="M618.5,97.5 H615 V86.7 H626 V90" fill="none" stroke="#a8a8a8" stroke-width="1.3"/>
  <circle cx="618.5" cy="89.5" r="0.9" fill="#a8a8a8"/>
  <polygon points="616,97 618.5,94 618.5,97" fill="#a8a8a8"/>
  <g transform="translate(624.5,95)"><circle r="2.8" fill="none" stroke="#a8a8a8" stroke-width="1.6"/><g stroke="#a8a8a8" stroke-width="1.2"><path d="M0,-3.8 V3.8 M-3.3,-1.9 L3.3,1.9 M-3.3,1.9 L3.3,-1.9"/></g><circle r="1" fill="#2a2a2a"/></g>
 </g>
</svg>

<!-- ============ ICONS B ============ -->
<svg style="left:650px;top:53px" width="15" height="15"><polygon points="7,0 14,4.5 7,9 0,4.5" fill="#a8a8a8"/><polyline points="1.5,8 7,11.8 12.5,8" fill="none" stroke="#a8a8a8" stroke-width="2.4"/></svg>
<svg style="left:645px;top:81px" width="15" height="14"><path d="M6.5,1 V12.5 M0.5,6.8 H12.5" stroke="#a8a8a8" stroke-width="1.6"/><polygon points="13.5,10 13.5,13.5 10,13.5" fill="#a8a8a8"/></svg>
<svg style="left:674px;top:82px" width="17" height="13"><circle cx="5.2" cy="5.2" r="4" fill="none" stroke="#d0d0d0" stroke-width="1.5"/><path d="M8,8 L10.8,10.8" stroke="#d0d0d0" stroke-width="1.8"/><polygon points="12,7 15.5,7 13.75,9" fill="#bbb"/></svg>
<svg style="left:1259px;top:82px" width="16" height="12"><circle cx="2" cy="1.8" r="1.2" fill="#bbb"/><rect x="0.8" y="5.2" width="2.4" height="2.2" fill="#bbb"/><circle cx="2" cy="10.2" r="1.2" fill="#bbb"/><path d="M5,1.8 H14.5 M5,6.3 H14.5 M5,10.2 H14.5" stroke="#bbb" stroke-width="2" stroke-linecap="round"/></svg>
<svg style="left:661px;top:108px" width="13" height="16"><path d="M6.5,1.5 C6.5,4 9.5,5.5 10.5,8.5 C11.5,12 9,14.5 6.5,14.5 C4,14.5 1.5,12.5 1.8,9.5 C2,7.5 3.2,6.2 3.5,5 C4.5,6.5 4.8,7.5 5,8 C5.2,5.5 6.5,4 6.5,1.5 Z" fill="none" stroke="#e9a53c" stroke-width="1.4" stroke-linejoin="round"/><path d="M6.5,8.5 C7.5,10 8.5,11 8,12.5 C7.5,13.5 5.5,13.5 5,12.5 C4.5,11 5.8,10 6.5,8.5 Z" fill="#e9a53c" opacity="0.35"/></svg>
<svg style="left:1290px;top:53px" width="15" height="15"><polygon points="7,0.3 13.2,3.6 13.2,10.4 7,13.7 0.8,10.4 0.8,3.6" fill="#a0a0a0"/><path d="M3,5.3 H11 M3,8.3 H11 M7,5.3 V8.3" stroke="#2c2c2c" stroke-width="1.3"/></svg>
<svg style="left:1384px;top:53px" width="15" height="15"><polygon points="0.3,6.8 3.7,0.6 10.7,0.6 14.1,6.8 10.7,13 3.7,13" fill="#a0a0a0" stroke="#a0a0a0" stroke-width="0.8" stroke-linejoin="round"/><polygon points="7.2,2.6 11.2,9.8 3.2,9.8" fill="#161616"/><circle cx="7.2" cy="7.6" r="1.9" fill="#a0a0a0"/><path d="M7.2,7.6 L7.2,3 M7.2,7.6 L3.8,9.6 M7.2,7.6 L10.6,9.6" stroke="#a0a0a0" stroke-width="0.9"/></svg>
<svg style="left:1498px;top:54px" width="15" height="13"><path d="M0,0 H5.2 L6.8,1.6 H14 V11.6 H0 Z" fill="#a0a0a0"/><rect x="5.8" y="8" width="3" height="1.3" fill="#161616"/></svg>
<svg style="left:1290px;top:82px" width="10" height="12"><polyline points="7.5,1 2,6 7.5,11" fill="none" stroke="#cfcfcf" stroke-width="1.7"/></svg>
<svg style="left:1322px;top:82px" width="10" height="12"><polyline points="1.5,1 7,6 1.5,11" fill="none" stroke="#5e5e5e" stroke-width="1.5"/></svg>
<svg style="left:1900px;top:81px" width="14" height="14"><path d="M8,1 L13,6 L11.8,7.2 L10.8,6.6 L8.2,9.2 L8.5,11.5 L7.3,12.7 L1.3,6.7 L2.5,5.5 L4.8,5.8 L7.4,3.2 L6.8,2.2 Z" fill="none" stroke="#c8c8c8" stroke-width="1.3" stroke-linejoin="round"/><path d="M4.2,9.8 L0.8,13.2" stroke="#c8c8c8" stroke-width="1.4"/></svg>
<svg style="left:1290px;top:152px" width="10" height="7"><polyline points="1,1 4.5,4.5 8,1" fill="none" stroke="#b8b8b8" stroke-width="1.6"/></svg>
<svg style="left:1858px;top:149px" width="14" height="14"><circle cx="7" cy="7" r="6" fill="none" stroke="#a0a0a0" stroke-width="1.1"/><text x="7" y="10.5" font-family="Liberation Sans" font-size="9" fill="#a0a0a0" text-anchor="middle">?</text></svg>
<svg style="left:1890px;top:149px" width="4" height="14"><circle cx="2" cy="2" r="1.5" fill="#b8b8b8"/><circle cx="2" cy="6.4" r="1.5" fill="#b8b8b8"/><circle cx="2" cy="10.8" r="1.5" fill="#b8b8b8"/></svg>
<svg style="left:1290px;top:345px" width="10" height="7"><polyline points="1,1 4.5,4.5 8,1" fill="none" stroke="#b8b8b8" stroke-width="1.6"/></svg>
<svg style="left:1858px;top:341px" width="14" height="14"><circle cx="7" cy="7" r="6" fill="none" stroke="#a0a0a0" stroke-width="1.1"/><text x="7" y="10.5" font-family="Liberation Sans" font-size="9" fill="#a0a0a0" text-anchor="middle">?</text></svg>
<svg style="left:1890px;top:341px" width="4" height="14"><circle cx="2" cy="2" r="1.5" fill="#b8b8b8"/><circle cx="2" cy="6.4" r="1.5" fill="#b8b8b8"/><circle cx="2" cy="10.8" r="1.5" fill="#b8b8b8"/></svg>
<svg style="left:1858px;top:436px" width="14" height="14"><circle cx="7" cy="7" r="6" fill="none" stroke="#a0a0a0" stroke-width="1.1"/><text x="7" y="10.5" font-family="Liberation Sans" font-size="9" fill="#a0a0a0" text-anchor="middle">?</text></svg>
<svg style="left:1890px;top:436px" width="4" height="14"><circle cx="2" cy="2" r="1.5" fill="#b8b8b8"/><circle cx="2" cy="6.4" r="1.5" fill="#b8b8b8"/><circle cx="2" cy="10.8" r="1.5" fill="#b8b8b8"/></svg>
<svg style="left:1515px;top:464px" width="9" height="9"><polygon points="4.5,0 9,4.5 4.5,9 0,4.5" fill="#3ab0e0"/></svg>
<svg style="left:1886px;top:477px" width="14" height="14"><path d="M6,11.5 H1 V1 H12.5 V6" fill="none" stroke="#b8b8b8" stroke-width="1.3"/><path d="M7,5.5 L7,13.5 L9,11.5 L10.5,14 L12,13.2 L10.6,10.8 L13,10.5 Z" fill="#b8b8b8"/></svg>
<svg style="left:1890px;top:894px" width="4" height="14"><circle cx="2" cy="2" r="1.5" fill="#b8b8b8"/><circle cx="2" cy="6.4" r="1.5" fill="#b8b8b8"/><circle cx="2" cy="10.8" r="1.5" fill="#b8b8b8"/></svg>
<svg style="left:1515px;top:921px" width="9" height="9"><polygon points="4.5,0 9,4.5 4.5,9 0,4.5" fill="#3590a8"/></svg>
<svg style="left:1886px;top:934px" width="14" height="14"><path d="M6,11.5 H1 V1 H12.5 V6" fill="none" stroke="#b8b8b8" stroke-width="1.3"/><path d="M7,5.5 L7,13.5 L9,11.5 L10.5,14 L12,13.2 L10.6,10.8 L13,10.5 Z" fill="#b8b8b8"/></svg>
<svg style="left:1290px;top:1031px" width="10" height="7"><polyline points="1,1 4.5,4.5 8,1" fill="none" stroke="#b8b8b8" stroke-width="1.6"/></svg>
<svg style="left:1890px;top:1026px" width="4" height="14"><circle cx="2" cy="2" r="1.5" fill="#b8b8b8"/><circle cx="2" cy="6.4" r="1.5" fill="#b8b8b8"/><circle cx="2" cy="10.8" r="1.5" fill="#b8b8b8"/></svg>
<svg style="left:1509px;top:595px" width="92" height="54">
 <g fill="#c8c8c8">
  <rect x="10" y="6" width="1.2" height="11.6"/><rect x="12.2" y="8.1" width="5.9" height="2.9" fill="#b8b8b8"/>
  <rect x="81" y="6" width="1.2" height="11.6"/><rect x="74.1" y="8.1" width="5.9" height="2.9" fill="#b8b8b8"/>
  <rect x="9.9" y="34.8" width="12" height="1.2"/><rect x="17.1" y="37" width="3" height="5.7" fill="#b8b8b8"/>
  <rect x="70" y="45.8" width="12" height="1.2"/><rect x="77.2" y="39.2" width="2.8" height="5.5" fill="#b8b8b8"/>
 </g>
 <g fill="none" stroke="#c8c8c8" stroke-width="1">
  <rect x="12.7" y="13.5" width="9" height="2.5"/>
  <rect x="70.5" y="13.5" width="9" height="2.5"/>
  <rect x="12.5" y="37.5" width="2.5" height="9"/>
  <rect x="72.5" y="35.5" width="2.5" height="9"/>
 </g>
 <g fill="#3ab4e0">
  <rect x="45.5" y="6" width="1" height="11.6" opacity="0.8"/><rect x="42.9" y="8" width="6.2" height="3"/>
  <rect x="40" y="40.5" width="11.8" height="1" opacity="0.8"/><rect x="47.2" y="38" width="2.9" height="6"/>
 </g>
 <g fill="none" stroke="#3ab4e0" stroke-width="1">
  <rect x="41.4" y="13.5" width="9.2" height="2.5"/>
  <rect x="42.5" y="36.5" width="2.5" height="9.3"/>
 </g>
</svg>
<svg style="left:10px;top:552px" width="15" height="12"><rect x="0" y="0" width="14" height="12" fill="#a0a0a0"/><polyline points="1.5,3 4.5,5.5 1.5,8" fill="none" stroke="#2a2a2a" stroke-width="1.4"/><rect x="7" y="7.5" width="5" height="1.4" fill="#2a2a2a"/></svg>
<svg style="left:99px;top:552px" width="14" height="15"><circle cx="10" cy="2.2" r="1.6" fill="#a0a0a0"/><path d="M4.5,5 L8,4 L10.5,6.5 L12.5,8 M8,4 L7,9 L9,11 L7.5,14 M7,9 L4.5,12" fill="none" stroke="#a0a0a0" stroke-width="1.7" stroke-linejoin="round"/><path d="M0.5,6.5 H4 M0.5,8.5 H4 M0.5,10.5 H3" stroke="#a0a0a0" stroke-width="0.9"/></svg>
<svg style="left:196px;top:551px" width="16" height="15"><path d="M1,1 L14,6 M14,1 L1,6" stroke="#a0a0a0" stroke-width="1.1"/><circle cx="7.5" cy="7.5" r="2.5" fill="#a0a0a0"/><rect x="5" y="10" width="5" height="4.5" fill="#a0a0a0"/><path d="M1,3 V9 M14,3 V9" stroke="#a0a0a0" stroke-width="0.9" stroke-dasharray="1.5 1"/></svg>
<svg style="left:10px;top:579px" width="14" height="15"><g transform="rotate(30 7 7.5)"><rect x="6.2" y="0" width="1.6" height="4" fill="#a0a0a0"/><rect x="2.5" y="4" width="9" height="2" fill="#a0a0a0"/><path d="M2.5,7 H11.5 V13.5 H2.5 Z" fill="#a0a0a0"/><path d="M5.3,9 V13.5 M8.6,9 V13.5" stroke="#2c2c2c" stroke-width="1.1"/></g></svg>
<svg style="left:71px;top:579px" width="14" height="14"><circle cx="5.8" cy="5.8" r="4.6" fill="none" stroke="#d0d0d0" stroke-width="1.5"/><path d="M9.2,9.2 L12.5,12.5" stroke="#d0d0d0" stroke-width="1.8"/></svg>

<!-- ============ LOC EDITOR WINDOW ============ -->
<div class="a" style="left:496px;top:382px;width:1009px;height:592px;box-shadow:0 0 5px 1px rgba(0,0,0,0.5);background:#2c2c2c;border:1px solid #3c3c3c"></div>
<div class="a" style="left:496px;top:382px;width:1008px;height:30px;background:#ffffff"></div>
<div class="t" style="left:525px;top:382px;line-height:30px;font-size:11.7px;color:#7a7a7a">yandex-games-sdk.localization-editor - YSDK_ExampleGame</div>
<div class="a" style="left:1385px;top:396px;width:10px;height:1px;background:#8a8a8a"></div>
<div class="a" style="left:1430px;top:391px;width:10px;height:10px;border:1px solid #8a8a8a"></div>
<svg style="left:1476px;top:391px" width="10" height="10"><path d="M0.3,0.3 L9.7,9.7 M9.7,0.3 L0.3,9.7" stroke="#8a8a8a" stroke-width="1"/></svg>
<div class="a" style="left:497px;top:412px;width:1006px;height:1px;background:#060606"></div><div class="a" style="left:497px;top:413px;width:1006px;height:25px;background:#141414"></div><div class="a" style="left:623px;top:437px;width:880px;height:1px;background:#060606"></div><div class="a tab" style="left:497px;top:413px;width:126px;height:25px"></div><div class="a" style="left:623px;top:413px;width:1px;height:25px;background:#060606"></div>
<div class="t" style="left:509px;top:413px;line-height:25px;color:#dcdcdc">Localization Editor</div>
<div class="a panel" style="left:497px;top:438px;width:1006px;height:39px"></div>
<div class="a" style="left:497px;top:477px;width:1006px;height:1px;background:#050505"></div>
<div class="a" style="left:505px;top:446px;width:56px;height:24px;background:#3a3a3a;border-radius:3px"></div>
<div class="t" style="left:531px;top:446px;line-height:24px;color:#dcdcdc">New</div>
<div class="a" style="left:569px;top:446px;width:59px;height:24px;background:#3a3a3a;border-radius:3px"></div>
<div class="t" style="left:595px;top:446px;line-height:24px;color:#dcdcdc">Save</div>
<div class="a" style="left:636px;top:446px;width:62px;height:24px;background:#3a3a3a;border-radius:3px"></div>
<div class="t" style="left:662px;top:446px;line-height:24px;color:#dcdcdc">Open</div>
<div class="a" style="left:1425px;top:446px;width:70px;height:24px;background:#3a3a3a;border-radius:3px"></div>
<div class="t" style="left:1451px;top:446px;line-height:24px;color:#dcdcdc">Reload</div>
<div class="a panel" style="left:497px;top:478px;width:216px;height:494px"></div>
<div class="a" style="left:713px;top:478px;width:1px;height:494px;background:#050505"></div>
<div class="a" style="left:505px;top:486px;width:200px;height:24px;background:#3f4263;border-radius:3px"></div>
<div class="t" style="left:517px;top:486px;line-height:24px;color:#e0e0e0">EN</div>
<div class="a" style="left:714px;top:478px;width:775px;height:494px;background:#1e1e1e"></div>
<div class="a" style="left:779px;top:497px;width:710px;height:19px;border:2px solid #282828;border-right:none"></div>
<div class="a" style="left:778px;top:497px;width:1px;height:19px;background:#aeafad"></div>
<div class="a" style="left:1489px;top:478px;width:14px;height:458px;background:#424242;border-left:1px solid #505050"></div>
<div class="a" style="left:1489px;top:936px;width:14px;height:36px;background:#1e1e1e;border-left:1px solid #3a3a3a"></div>
<div class="a" style="left:1490px;top:494px;width:13px;height:2px;background:#8a8a8a"></div>
<div style="position:absolute;left:714px;top:478px;font-family:'Liberation Mono',monospace;font-size:12.9px;line-height:19px;white-space:pre">
<div class="a" style="left:0;top:0;width:38px;text-align:right;color:#858585">1</div>
<div class="a" style="left:0;top:19px;width:38px;text-align:right;color:#c6c6c6">2</div>
<div class="a" style="left:0;top:38px;width:38px;text-align:right;color:#858585">3</div>
<div class="a" style="left:64.5px;top:0;color:#d4d4d4">{</div>
<div class="a" style="left:64.5px;top:19px;color:#d4d4d4">    <span style="color:#9cdcfe">"title"</span>: <span style="color:#ce9178">"best game in t3asd a asd a"</span></div>
<div class="a" style="left:64.5px;top:38px;color:#d4d4d4">}</div>
</div>
<svg style="left:1012px;top:505px" width="10" height="16"><path d="M2,0.5 H8 M5,0.5 V15.5 M2,15.5 H8" stroke="#e8e8e8" stroke-width="1.2" fill="none"/><path d="M5,1 V15" stroke="#222" stroke-width="0.4"/></svg>
<div class="a" style="left:497px;top:411px;width:1007px;height:562px;border:1px solid #000;border-top:none"></div>
<div class="a" style="left:1493px;top:973px;width:7px;height:2px;background:#a0a0a0;border-radius:1px"></div>
<!-- loc icons -->
<svg style="left:505px;top:389px" width="15" height="15"><circle cx="7" cy="7" r="6.3" fill="#f2f2f2" stroke="#d8d8d8" stroke-width="1"/><path d="M7,2.5 C5.8,4.5 4.3,6 4.3,8 A2.7,2.7 0 0 0 9.7,8 C9.7,6 8.2,4.5 7,2.5 Z" fill="none" stroke="#8a8a8a" stroke-width="1.1"/></svg>
<svg style="left:1485px;top:420px" width="12" height="12"><path d="M0,1.5 H12 M0,6.5 H12 M0,11.5 H12" stroke="#bdbdbd" stroke-width="1.8"/></svg>
<svg style="left:512px;top:451px" width="14" height="13"><path d="M6,0 V12 M0,6 H12" stroke="#c8c8c8" stroke-width="1.5"/><polygon points="13,8.5 13,12.5 9,12.5" fill="#c8c8c8"/></svg>
<svg style="left:576px;top:450px" width="14" height="14"><path d="M1.5,1.5 H9 L12.5,5 V12.5 H1.5 Z" fill="none" stroke="#c8c8c8" stroke-width="1.2"/><path d="M4.2,1.5 V5.2 H8 V1.5" fill="none" stroke="#c8c8c8" stroke-width="1.1"/></svg>
<svg style="left:643px;top:452px" width="14" height="11"><path d="M0.5,0.5 H5 L6.5,2 H12.5 V10.5 H0.5 Z" fill="#c8c8c8"/></svg>
<svg style="left:1432px;top:450px" width="14" height="14"><path d="M10.6,3.4 A5,5 0 1 0 11.8,8.2" fill="none" stroke="#c8c8c8" stroke-width="1.8"/><polygon points="12.8,0.5 12.8,6.2 7.2,5.5" fill="#c8c8c8"/></svg>
</body></html>
